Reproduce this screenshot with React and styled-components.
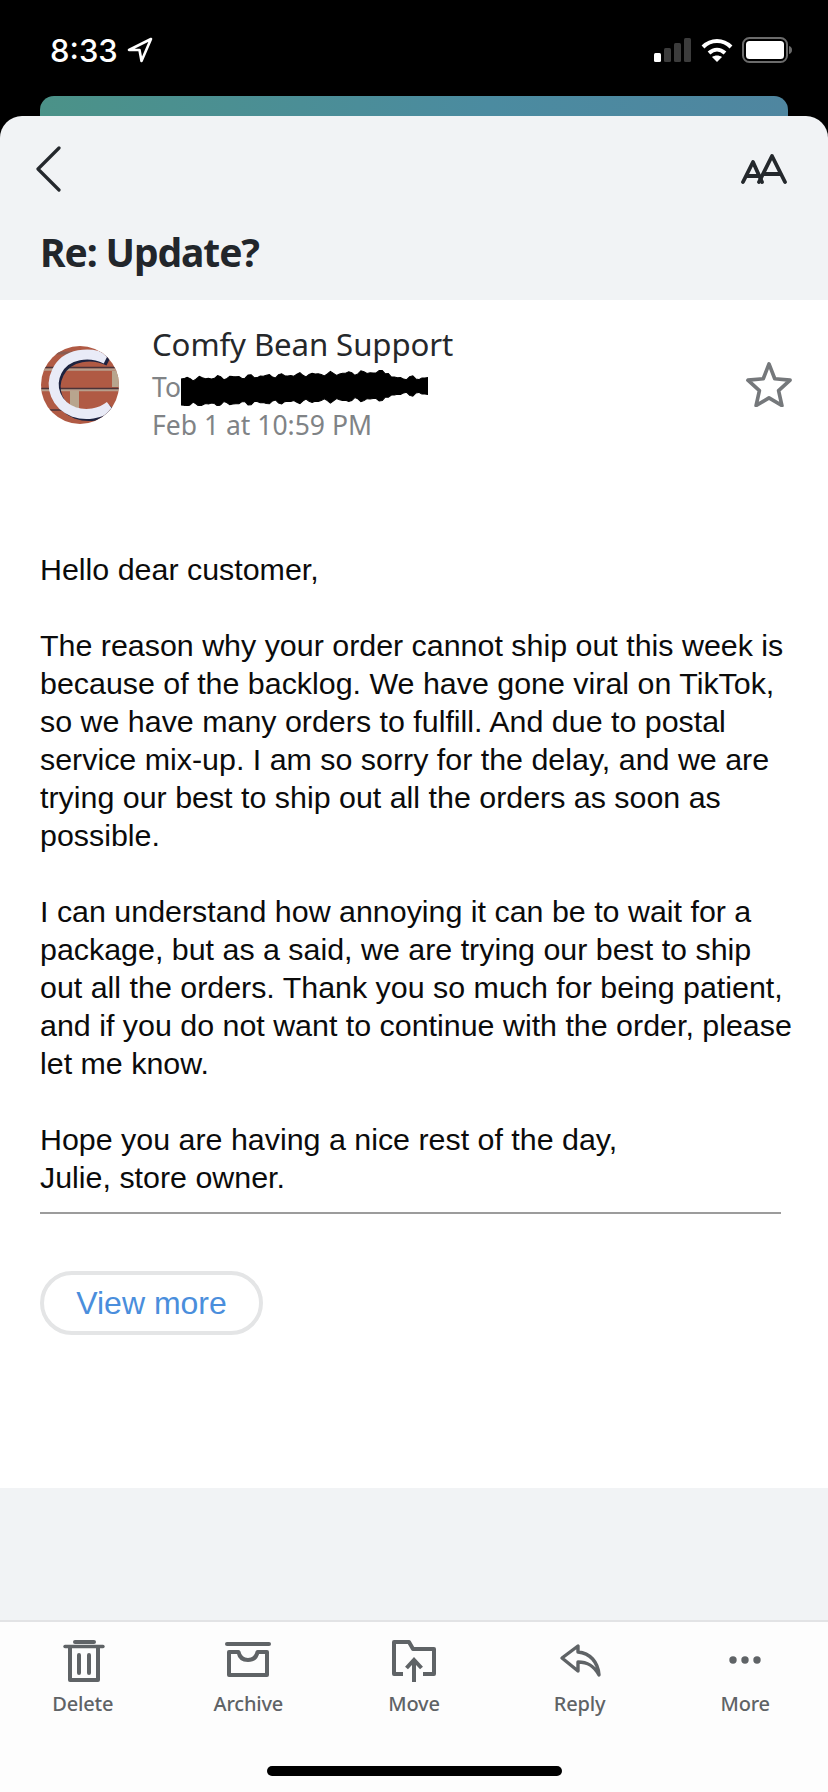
import styled, { createGlobalStyle } from "styled-components";

const GlobalStyle = createGlobalStyle`
  html, body { margin: 0; padding: 0; background: #000; }
  * { box-sizing: border-box; }
`;

const Screen = styled.div`
  width: 828px;
  height: 1792px;
  display: flex;
  flex-direction: column;
  background: #000;
  overflow: hidden;
  font-family: "Noto Sans", sans-serif;
`;

const StatusBar = styled.div`
  height: 96px;
  padding: 33px 36px 0 50px;
  display: flex;
  justify-content: space-between;
  align-items: flex-start;
  color: #fff;
`;

const Clock = styled.div`
  display: flex;
  align-items: center;
  gap: 9px;
  height: 34px;
  font-family: Inter, sans-serif;
  font-size: 31px;
  font-weight: 500;
`;

const StatusIcons = styled.div`
  display: flex;
  align-items: center;
  gap: 9px;
  height: 34px;
`;

const PeekCard = styled.div`
  height: 20px;
  margin: 0 40px;
  border-radius: 14px 14px 0 0;
  background: linear-gradient(90deg, #4b9288, #4b8ba0 60%, #4f86a0);
`;

const Card = styled.div`
  flex: 1;
  display: flex;
  flex-direction: column;
  border-radius: 22px 22px 0 0;
  background: #f1f3f5;
  overflow: hidden;
`;

const Header = styled.header`
  height: 184px;
  padding: 30px 41px 0 36px;
`;

const NavRow = styled.div`
  display: flex;
  justify-content: space-between;
  align-items: flex-start;
  height: 81px;
`;

const FontSizeIcon = styled.svg`
  margin-top: 8px;
`;

const Subject = styled.h1`
  margin: 0 0 0 4px;
  font-size: 39px;
  line-height: 50px;
  font-weight: 700;
  letter-spacing: -1.1px;
  color: #22262b;
`;

const Message = styled.main`
  height: 1188px;
  background: #fff;
  padding: 26px 36px 0 40px;
`;

const SenderRow = styled.div`
  display: flex;
  align-items: center;
  height: 118px;
`;

const Sender = styled.div`
  flex: 1;
  margin-left: 32px;
`;

const SenderName = styled.div`
  margin: -3px 0 3px;
  font-size: 31.2px;
  line-height: 42px;
  color: #25282b;
  letter-spacing: -0.1px;
`;

const MetaLine = styled.div`
  display: flex;
  align-items: center;
  height: 38px;
  font-size: 26.5px;
  color: #808386;
`;

const Scribble = styled.svg`
  flex: none;
`;

const StarIcon = styled.svg`
  margin: -3px -1px 0 0;
`;

const Body = styled.div`
  margin-top: 106px;
  font-family: "Liberation Sans", Arial, sans-serif;
  font-size: 30.4px;
  line-height: 38px;
  color: #0b0b0b;
`;

const Para = styled.p`
  margin: 0 0 38px;

  &:last-child {
    margin-bottom: 0;
  }
`;

const Rule = styled.hr`
  margin: 16px 11px 0 0;
  border: none;
  border-top: 2px solid #9c9c9c;
`;

const ViewMore = styled.button`
  display: block;
  margin-top: 57px;
  width: 223px;
  height: 64px;
  padding: 0;
  border: 4px solid #e4e5e6;
  border-radius: 32px;
  background: #fff;
  font-family: "Liberation Sans", Arial, sans-serif;
  font-size: 32px;
  color: #4a8edc;
`;

const Spacer = styled.div`
  height: 132px;
`;

const Toolbar = styled.nav`
  height: 172px;
  position: relative;
  display: grid;
  grid-template-columns: repeat(5, 1fr);
  background: #fdfdfd;
  border-top: 2px solid #e2e3e5;
  padding-top: 18px;
`;

const ToolButton = styled.div`
  display: flex;
  flex-direction: column;
  align-items: center;
  color: #5f6366;
`;

const ToolIcon = styled.svg`
  display: block;
  width: 48px;
  height: 48px;
`;

const ToolLabel = styled.span`
  margin-top: 2px;
  font-size: 20px;
  line-height: 28px;
  font-weight: 500;
  letter-spacing: -0.2px;
`;

const HomeBar = styled.div`
  position: absolute;
  left: 267px;
  bottom: 16px;
  width: 295px;
  height: 10px;
  border-radius: 5px;
  background: #000;
`;

function scribblePath() {
  const top = [];
  const bottom = [];
  for (let x = 0; x <= 243; x += 3) {
    const jitter = Math.sin(x * 1.7) * 1.4 + Math.sin(x * 0.63) * 1.1;
    const tail = x > 206;
    const topY = tail ? 10 : 11 - x * 0.035;
    const bottomY = tail ? 26 : 37 - x * 0.03;
    top.push(`${x},${(topY + jitter).toFixed(1)}`);
    bottom.push(`${x},${(bottomY - jitter).toFixed(1)}`);
  }
  return `M${top.join(" ")} L${bottom.reverse().join(" ")}Z`;
}

const tools = [
  {
    label: "Delete",
    icon: (
      <>
        <path d="M16 2h19" strokeWidth="4" strokeLinecap="round" />
        <path d="M6 6.500h38" strokeWidth="3.400" strokeLinecap="round" />
        <path d="M11 8v32h28V8" strokeLinejoin="round" />
        <path d="M20 15v18M30 15v18" strokeLinecap="round" />
      </>
    ),
  },
  {
    label: "Archive",
    icon: (
      <>
        <path d="M3 4h42" strokeLinecap="round" />
        <path d="M5 12h9.500c1 5 4 8 9.500 8s8.500-3 9.500-8H43v23H5z" strokeLinejoin="round" />
      </>
    ),
  },
  {
    label: "Move",
    icon: (
      <>
        <path d="M13 34H4V2h15l4 7h21v25H33" strokeLinejoin="round" />
        <path d="M24 42V20M16.500 28l7.500-8 7.500 8" />
      </>
    ),
  },
  {
    label: "Reply",
    icon: (
      <path
        d="M6 18L22 6v6c12 1 20 10 21 23-5-9-11-13-21-13v9z"
        strokeLinejoin="round"
        strokeWidth="3.400"
      />
    ),
  },
  {
    label: "More",
    icon: (
      <>
        <circle cx="12" cy="20" r="3.700" fill="currentColor" stroke="none" />
        <circle cx="24" cy="20" r="3.700" fill="currentColor" stroke="none" />
        <circle cx="36" cy="20" r="3.700" fill="currentColor" stroke="none" />
      </>
    ),
  },
];

export default function App() {
  return (
    <Screen>
      <GlobalStyle />
      <StatusBar>
        <Clock>
          8:33
          <svg width="26" height="26" viewBox="0 0 26 26" fill="none" stroke="#fff" strokeWidth="2.600" strokeLinejoin="round">
            <path d="M24 2L2 13h10.500l2 11z" />
          </svg>
        </Clock>
        <StatusIcons>
          <svg width="38" height="24" viewBox="0 0 38 24">
            <rect x="0" y="15" width="7" height="9" rx="1.500" fill="#fff" />
            <rect x="10" y="10" width="7" height="14" rx="1.500" fill="#3c3c3c" />
            <rect x="20" y="5" width="7" height="19" rx="1.500" fill="#3c3c3c" />
            <rect x="30" y="0" width="7" height="24" rx="1.500" fill="#3c3c3c" />
          </svg>
          <svg width="32" height="24" viewBox="0 0 32 24" fill="none" stroke="#fff" strokeWidth="4">
            <path d="M2 9c8-8 20-8 28 0" />
            <path d="M8 15c5-4.500 11-4.500 16 0" />
            <path d="M16 24l-5-5c3-2 7-2 10 0z" fill="#fff" stroke="none" />
          </svg>
          <svg width="50" height="26" viewBox="0 0 50 26">
            <rect x="1" y="1" width="44" height="24" rx="6.500" fill="none" stroke="#6b6b6b" strokeWidth="2" />
            <rect x="4" y="4" width="38" height="18" rx="3.500" fill="#fff" />
            <path d="M47 9c2 .6 3 2 3 4s-1 3.400-3 4z" fill="#6b6b6b" />
          </svg>
        </StatusIcons>
      </StatusBar>
      <PeekCard />
      <Card>
        <Header>
          <NavRow>
            <svg width="26" height="46" viewBox="0 0 26 46" fill="none" stroke="#24282c" strokeWidth="3.200" strokeLinecap="round" strokeLinejoin="round">
              <path d="M23 2L2 23l21 21" />
            </svg>
            <FontSizeIcon width="46" height="30" viewBox="0 0 46 30" fill="none" stroke="#24282c" strokeWidth="3.800" strokeLinecap="round" strokeLinejoin="round">
              <path d="M2 28L12 8l9 20M5.500 22h13" />
              <path d="M18 28L31 2l13 26M23 20h16" />
            </FontSizeIcon>
          </NavRow>
          <Subject>Re: Update?</Subject>
        </Header>
        <Message>
          <SenderRow>
            <svg width="80" height="80" viewBox="0 0 80 80">
              <defs>
                <clipPath id="avatarClip">
                  <circle cx="40" cy="40" r="39" />
                </clipPath>
              </defs>
              <g clipPath="url(#avatarClip)">
                <rect width="80" height="80" fill="#b05a44" />
                <path d="M0 8h80" stroke="#8a5a50" strokeWidth="3" />
                <path d="M0 24.500h80M0 45h80" stroke="#b89f8c" strokeWidth="2.500" />
                <path d="M0 22.500h80M0 43.500h80M0 65h80" stroke="#4a3338" strokeWidth="1.500" />
                <rect x="30" y="46" width="9" height="18" fill="#b8a58e" />
                <rect x="72" y="26" width="8" height="16" fill="#b8a58e" />
                <path d="M66 14C50 6 26 8 17 26c-8 16-1 34 17 41 12 4 26 2 36-6" fill="none" stroke="#1d2340" strokeWidth="9" transform="translate(2.500 2.500)" />
                <path d="M66 14C50 6 26 8 17 26c-8 16-1 34 17 41 12 4 26 2 36-6" fill="none" stroke="#e9ebf7" strokeWidth="10" />
              </g>
            </svg>
            <Sender>
              <SenderName>Comfy Bean Support</SenderName>
              <MetaLine>
                To
                <Scribble width="247" height="38" viewBox="0 0 243 38" preserveAspectRatio="none">
                  <path d={scribblePath()} fill="#000" stroke="#000" strokeWidth="1" />
                </Scribble>
              </MetaLine>
              <MetaLine>Feb 1 at 10:59 PM</MetaLine>
            </Sender>
            <StarIcon width="48" height="46" viewBox="0 0 48 48" fill="none" stroke="#75787b" strokeWidth="3.800" strokeLinejoin="round">
              <path d="M24 3l6 15.500 16 1.500-12 11 3.500 15.500L24 38.500 10.500 46.500 14 31 2 20l16-1.500z" />
            </StarIcon>
          </SenderRow>
          <Body>
            <Para>Hello dear customer,</Para>
            <Para>
              The reason why your order cannot ship out this week is because of the backlog. We have gone viral on TikTok, so we have many orders to fulfill. And due to postal service mix-up. I am so sorry for the delay, and we are trying our best to ship out all the orders as soon as possible.
            </Para>
            <Para>
              I can understand how annoying it can be to wait for a package, but as a said, we are trying our best to ship out all the orders. Thank you so much for being patient, and if you do not want to continue with the order, please let me know.
            </Para>
            <Para>
              Hope you are having a nice rest of the day,
              <br />
              Julie, store owner.
            </Para>
          </Body>
          <Rule />
          <ViewMore>View more</ViewMore>
        </Message>
        <Spacer />
        <Toolbar>
          {tools.map((tool) => (
            <ToolButton key={tool.label}>
              <ToolIcon viewBox="0 0 48 48" fill="none" stroke="currentColor" strokeWidth="4">
                {tool.icon}
              </ToolIcon>
              <ToolLabel>{tool.label}</ToolLabel>
            </ToolButton>
          ))}
          <HomeBar />
        </Toolbar>
      </Card>
    </Screen>
  );
}
